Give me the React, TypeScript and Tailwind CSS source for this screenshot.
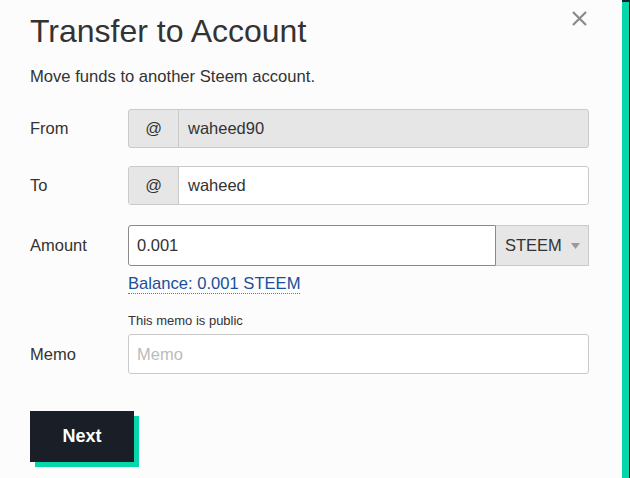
export default function App() {
  return (
    <div className="flex h-[478px] w-[630px] overflow-hidden bg-[#fcfcfc] font-['Liberation_Sans',Arial,sans-serif] text-[#333]">
      <div className="relative flex-1 pl-[30px] pr-[33px] pt-[9px]">
        <button className="absolute right-[34px] top-[10px] text-[#8a8a8a]" aria-label="Close">
          <svg width="17" height="17" viewBox="0 0 17 17" stroke="currentColor" strokeWidth="2.2" fill="none">
            <path d="M2 2L15 15M15 2L2 15" />
          </svg>
        </button>

        <h1 className="text-[32px] leading-[44px] text-[#333]">Transfer to Account</h1>
        <p className="mt-[14px] text-[16.6px] leading-[20px]">Move funds to another Steem account.</p>

        <div className="mt-[22px] flex items-center">
          <label className="w-[98px] text-[16.5px]">From</label>
          <div className="flex h-[39px] flex-1 rounded-[3px] border border-[#cacaca] bg-[#e6e6e6]">
            <span className="flex w-[50px] items-center justify-center border-r border-[#cacaca] text-[16.5px]">@</span>
            <span className="flex items-center px-[9px] text-[16.5px]">waheed90</span>
          </div>
        </div>

        <div className="mt-[18px] flex items-center">
          <label className="w-[98px] text-[16.5px]">To</label>
          <div className="flex h-[39px] flex-1 overflow-hidden rounded-[3px] border border-[#cacaca] bg-white">
            <span className="flex w-[50px] items-center justify-center border-r border-[#cacaca] bg-[#e6e6e6] text-[16.5px]">@</span>
            <span className="flex items-center px-[9px] text-[16.5px]">waheed</span>
          </div>
        </div>

        <div className="mt-[20px] flex">
          <label className="w-[98px] pt-[8px] text-[16.5px]">Amount</label>
          <div className="flex-1">
            <div className="flex h-[41px]">
              <div className="flex flex-1 items-center rounded-l-[3px] border border-[#8a8a8a] bg-white px-[8px] text-[16.5px]">0.001</div>
              <div className="flex w-[93px] items-center justify-between border border-l-0 border-[#cacaca] bg-[#e6e6e6] pl-[9px] pr-[8px] text-[16.5px]">
                <span>STEEM</span>
                <svg width="9" height="6" viewBox="0 0 9 6" fill="#9a9a9a">
                  <path d="M0 0H9L4.5 6Z" />
                </svg>
              </div>
            </div>
            <a className="mt-[8px] inline-block border-b border-dotted border-[#777] text-[16.6px] leading-[19px] text-[#1a5099]">Balance: 0.001 STEEM</a>
          </div>
        </div>

        <div className="mt-[17px] flex">
          <div className="w-[98px]" />
          <p className="text-[13px] leading-[16px]">This memo is public</p>
        </div>
        <div className="mt-[5px] flex items-center">
          <label className="w-[98px] text-[16.5px]">Memo</label>
          <div className="flex h-[40px] flex-1 items-center rounded-[3px] border border-[#cacaca] bg-white px-[8px] text-[16.5px] text-[#bbb]">Memo</div>
        </div>

        <div className="relative mt-[37px] h-[51px] w-[104px]">
          <div className="absolute left-[5px] top-[5px] h-[51px] w-[104px] bg-[#06d6a9]" />
          <button className="relative h-[51px] w-[104px] bg-[#1a1f27] text-[18px] font-bold text-white">Next</button>
        </div>
      </div>
      <div className="flex w-[8px] flex-col">
        <div className="h-[2px] bg-[#1a1f27]" />
        <div className="flex flex-1">
          <div className="w-[7px] bg-[#06d6a9]" />
          <div className="w-[1px] bg-[#1a1f27]" />
        </div>
      </div>
    </div>
  );
}
